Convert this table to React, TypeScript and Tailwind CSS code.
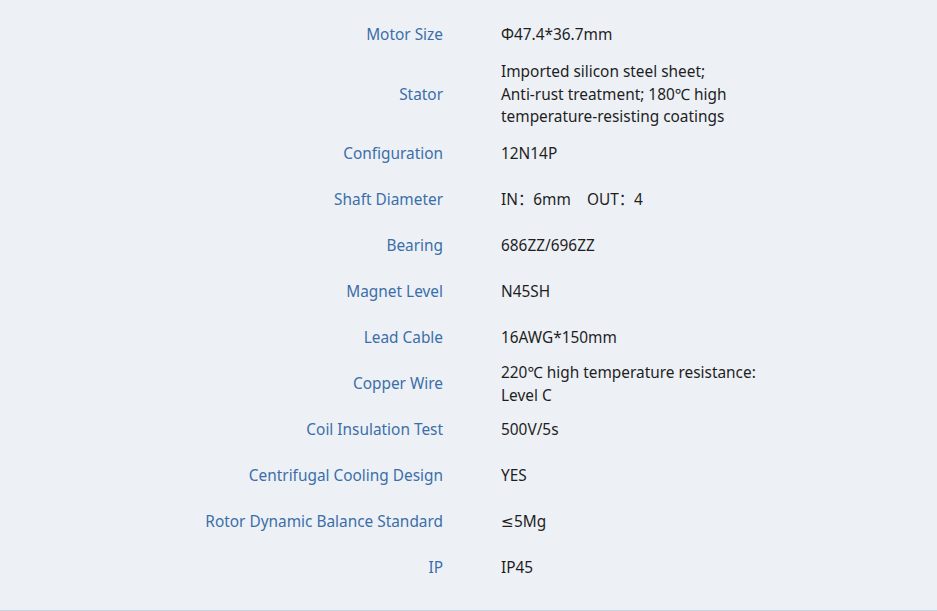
import React from 'react';

const SPECS: { label: string; value: React.ReactNode[] }[] = [
  { label: 'Motor Size', value: ['Φ47.4*36.7mm'] },
  {
    label: 'Stator',
    value: ['Imported silicon steel sheet;', 'Anti-rust treatment; 180℃ high', 'temperature-resisting coatings'],
  },
  { label: 'Configuration', value: ['12N14P'] },
  { label: 'Shaft Diameter', value: ['IN：6mm\u00a0\u00a0\u00a0\u00a0OUT：4'] },
  { label: 'Bearing', value: ['686ZZ/696ZZ'] },
  { label: 'Magnet Level', value: ['N45SH'] },
  { label: 'Lead Cable', value: ['16AWG*150mm'] },
  { label: 'Copper Wire', value: ['220℃ high temperature resistance:', 'Level C'] },
  { label: 'Coil Insulation Test', value: ['500V/5s'] },
  { label: 'Centrifugal Cooling Design', value: ['YES'] },
  {
    label: 'Rotor Dynamic Balance Standard',
    value: [
      <>
        <span style={{ fontFamily: '"DejaVu Sans", sans-serif' }}>≤</span>5Mg
      </>,
    ],
  },
  { label: 'IP', value: ['IP45'] },
];

export default function App() {
  return (
    <div
      className="w-[937px] h-[611px] bg-[#edf1f6] border-b border-[#ccd3da] pt-[12px] text-[15.4px]"
      style={{ fontFamily: '"Noto Sans", "Noto Sans CJK SC", Arial, sans-serif' }}
    >
      {SPECS.map(spec => (
        <div
          key={spec.label}
          className={
            spec.value.length > 2
              ? 'grid grid-cols-[443px_1fr] items-center min-h-[46px] py-[3px]'
              : 'grid grid-cols-[443px_1fr] items-center min-h-[46px]'
          }
        >
          <div className="text-right text-[#3b6ea8] leading-[22.5px]">{spec.label}</div>
          <div className="pl-[58px] text-[#1e1e1e] leading-[22.5px]">
            {spec.value.map((line, i) => (
              <div key={i}>{line}</div>
            ))}
          </div>
        </div>
      ))}
    </div>
  );
}
